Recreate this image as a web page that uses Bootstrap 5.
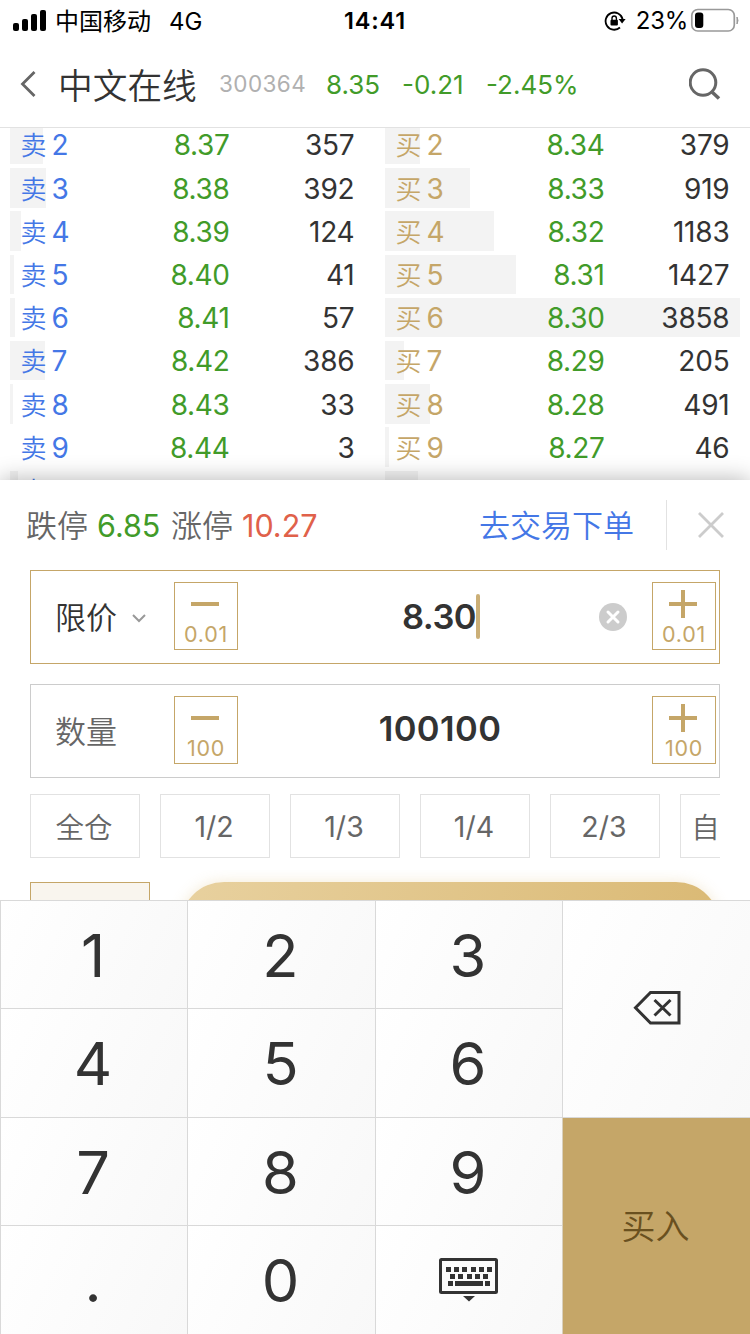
<!DOCTYPE html>
<html lang="zh-CN">
<head>
<meta charset="utf-8">
<meta name="viewport" content="width=device-width, initial-scale=1">
<title>中文在线 300364</title>
<link href="https://cdn.jsdelivr.net/npm/bootstrap@5.3.0/dist/css/bootstrap.min.css" rel="stylesheet">
<style>
:root{--gold:#c5a668;--up:#e0614a;--down:#419b29;--ink:#333;--blue:#4477e6;--mute:#666}
body{font-family:Inter,"Noto Sans CJK SC",sans-serif;color:var(--ink);width:750px;height:1334px;overflow:hidden;background:#fff;line-height:1}
svg{display:block;flex:none}
.t-gold{color:var(--gold)}.t-up{color:var(--up)}.t-down{color:var(--down)}.t-blue{color:var(--blue)}.t-mute{color:var(--mute)}
.statusbar{height:40px;color:#000;font-size:24px;padding-top:1px}
.carrier{padding-top:2px}.net{padding-top:2px}
.third{flex:1 1 0}
.clock{font-weight:600;font-size:23.5px;letter-spacing:.8px}
.net{margin-left:18px}
.pct{margin:0 2px 0 10px;letter-spacing:-.3px;padding-top:1px}
.titlebar{height:88px;border-bottom:1px solid #e2e2e2;padding:1px 29px 0 20px}
.stock{font-size:34.7px;width:161px;margin-left:21px;font-weight:350;padding-top:4px}
.code{font-size:22.5px;color:#b0b0b0;letter-spacing:.4px;width:107px;padding-top:1px}
.quote{font-size:26px;padding-top:1px}
.book{height:352px;overflow:hidden}
.side{margin-top:-2.9px;padding:0 10px}
.level{height:43.2px;position:relative;font-size:28px}
.depth{position:absolute;left:0;top:0;height:39.3px;background:#f3f3f3}
.level .in{position:relative;height:40.7px;padding:0 10.5px}
.lab{width:60px}.lab span{font-size:26px;font-weight:350}.lab b{font-weight:400;margin-left:5px}
.price{width:149px;letter-spacing:-.35px}.vol{letter-spacing:-.2px}
.sheet{height:420px;box-shadow:0 0 22px rgba(0,0,0,.3);position:relative;background:#fff}
.sheethead{height:90px;padding:0 26px;font-size:31px}
.sheethead .cj{padding-top:1px}.sheethead .lim{padding-top:2px}
.lim{font-size:30.5px}
.sheethead .cj,.field .cj,.chip .cj{font-weight:350}
.vline{width:1px;height:50px;background:#e2e2e2}
.field{height:94px;border:1px solid #ccc;margin:0 30px 20px;padding:11px 3px 0 24px}
.field.on{border-color:var(--gold)}
.fname{width:119px;height:68px;font-size:31px;padding-top:2px}
.step{width:64px;height:68px;border:1px solid var(--gold);color:var(--gold);font-size:21.5px;letter-spacing:.7px;padding:7px 2px 4px 0}
.stepv{position:relative;left:1px}
.amount{height:68px;font-weight:600;font-size:34.5px;position:relative;padding:1px 8px 0 0}
.amount .val{letter-spacing:-.5px;padding-top:1px}
.caret{width:4px;height:45px;border-radius:2px;background:var(--gold);opacity:.9}
.amount .qty{letter-spacing:.4px;margin:0 2px 3px 0}
.clear{position:absolute;right:25px;top:21px}
.chips{margin:-4px 30px 24px;gap:20px;overflow:hidden}
.chip{flex:0 0 110px;height:64px;border:1px solid #e2e2e2;font-size:28.5px;color:var(--mute);padding:3px 2px 0 0}
.chip .cj{padding-top:1px}
.actions{height:18px;padding:0 30px;gap:30px;clip-path:inset(-12px 0 0 0)}
.mode{width:120px;height:88px;border:1px solid var(--gold);background:#f9f5ee;color:var(--gold);font-size:26px;line-height:26px;padding-top:17.5px}
.buy{width:540px;height:88px;border-radius:44px;background:linear-gradient(100deg,#e8d19f,#dab974);box-shadow:0 0 14px rgba(218,185,116,.3)}
.keypad{display:grid;height:434px;grid-template-columns:187px 188px 187px 188px;grid-template-rows:108px 109px 108px 109px;position:relative}
.pkey{border:0 solid #d9d9d9;border-width:1px 0 0 1px;background:linear-gradient(115deg,#fff,#f8f8f8);font-size:59.5px;padding:2px 2px 0 0}
.tall{grid-column:4;grid-row:1/3;padding:0}
.go{grid-column:4;grid-row:3/5;background:var(--gold);border-left:1px solid #d9d0bd;border-top:1px solid #d9d9d9;color:#69501f;font-size:34px;font-weight:350;padding:1px 2px 0 0}
</style>
</head>
<body class="d-flex flex-column">

<div class="statusbar d-flex align-items-center">
  <div class="third d-flex align-items-center">
    <svg width="35" height="22" viewBox="0 0 35 22" style="margin-left:12px"><rect x="1" y="13" width="6" height="8" rx="2"/><rect x="10" y="9" width="6" height="12" rx="2"/><rect x="19" y="4" width="6" height="17" rx="2"/><rect x="28" y="0" width="6" height="21" rx="2"/></svg>
    <span class="carrier ms-2">中国移动</span><span class="net">4G</span>
  </div>
  <div class="clock">14:41</div>
  <div class="third d-flex align-items-center justify-content-end">
    <svg width="22" height="20" viewBox="0 0 22 20"><path d="M18.600 8.300A8.600 8.600 0 1 0 16 16.500" fill="none" stroke="#000" stroke-width="1.800"/><path d="M14.600 8h7l-3.500 4.600z"/><rect x="6.500" y="8.700" width="7.400" height="5.800" rx="1"/><path d="M8 9V7.200a2.200 2.200 0 0 1 4.400 0V9" fill="none" stroke="#000" stroke-width="1.400"/></svg>
    <span class="pct">23%</span>
    <svg width="50" height="24" viewBox="0 0 50 24" style="margin-right:10px;margin-top:-2px"><rect x="1.800" y="1.500" width="42.500" height="21.500" rx="6" fill="none" stroke="#999" stroke-width="1.700"/><rect x="5" y="4.500" width="8.300" height="15.500" rx="3"/><path d="M47 9q2 3.500 0 7z" fill="#999" stroke="#999"/></svg>
  </div>
</div>

<header class="titlebar d-flex align-items-center">
  <svg width="17" height="28" viewBox="0 0 17 28"><path d="M14.500 2 2.500 14l12 12" fill="none" stroke="#666" stroke-width="2.800"/></svg>
  <span class="stock text-nowrap">中文在线</span>
  <span class="code">300364</span>
  <span class="quote t-down" style="width:76px">8.35</span>
  <span class="quote t-down" style="width:84px">-0.21</span>
  <span class="quote t-down">-2.45%</span>
  <svg class="ms-auto" width="32" height="32" viewBox="0 0 32 32"><circle cx="14" cy="14.500" r="12.800" fill="none" stroke="#666" stroke-width="3"/><path d="m22.500 23.500 7.500 7" stroke="#666" stroke-width="3.500"/></svg>
</header>

<main class="book d-flex">
  <section class="side w-50" id="asks"></section>
  <section class="side w-50" id="bids"></section>
</main>

<section class="sheet">
  <div class="sheethead d-flex align-items-center">
    <span class="cj t-mute">跌停</span><span class="lim t-down" style="margin-left:9px;width:74px">6.85</span>
    <span class="cj t-mute">涨停</span><span class="lim t-up" style="margin-left:9px">10.27</span>
    <span class="cj t-blue ms-auto">去交易下单</span>
    <span class="vline" style="margin-left:32px"></span>
    <svg width="28" height="28" viewBox="0 0 28 28" style="margin-left:30px;margin-right:-1px"><path d="m2 2 24 24M26 2 2 26" stroke="#ccc" stroke-width="2.800"/></svg>
  </div>

  <div class="field on d-flex align-items-start">
    <div class="fname d-flex align-items-center"><span class="cj">限价</span><svg width="16" height="10" viewBox="0 0 16 10" style="margin-left:14px;margin-top:1px"><path d="m2 2 6 6 6-6" fill="none" stroke="#999" stroke-width="2"/></svg></div>
    <div class="step d-flex flex-column align-items-center"><svg width="28" height="28"><path d="M0 14h28" stroke="#c5a668" stroke-width="4"/></svg><span class="mt-auto stepv">0.01</span></div>
    <div class="amount live flex-fill d-flex align-items-center justify-content-center"><span class="val">8.30</span><span class="caret"></span>
      <svg class="clear" width="28" height="28"><circle cx="14" cy="14" r="14" fill="#ccc"/><path d="m9 9 10 10M19 9 9 19" stroke="#fff" stroke-width="3" stroke-linecap="round"/></svg></div>
    <div class="step d-flex flex-column align-items-center"><svg width="28" height="28"><path d="M0 14h28M14 0v28" stroke="#c5a668" stroke-width="4"/></svg><span class="mt-auto stepv">0.01</span></div>
  </div>

  <div class="field d-flex align-items-start">
    <div class="fname d-flex align-items-center t-mute"><span class="cj">数量</span></div>
    <div class="step d-flex flex-column align-items-center"><svg width="28" height="28"><path d="M0 14h28" stroke="#c5a668" stroke-width="4"/></svg><span class="mt-auto stepv">100</span></div>
    <div class="amount flex-fill d-flex align-items-center justify-content-center"><span class="val qty">100100</span></div>
    <div class="step d-flex flex-column align-items-center"><svg width="28" height="28"><path d="M0 14h28M14 0v28" stroke="#c5a668" stroke-width="4"/></svg><span class="mt-auto stepv">100</span></div>
  </div>

  <div class="chips d-flex">
    <div class="chip d-flex align-items-center justify-content-center"><span class="cj">全仓</span></div>
    <div class="chip d-flex align-items-center justify-content-center">1/2</div>
    <div class="chip d-flex align-items-center justify-content-center">1/3</div>
    <div class="chip d-flex align-items-center justify-content-center">1/4</div>
    <div class="chip d-flex align-items-center justify-content-center">2/3</div>
    <div class="chip d-flex align-items-center justify-content-center"><span class="cj text-nowrap">自定义</span></div>
  </div>

  <div class="actions d-flex">
    <div class="mode text-center">标准版</div>
    <div class="buy"></div>
  </div>
</section>

<section class="keypad">
  <div class="pkey d-flex align-items-center justify-content-center">1</div>
  <div class="pkey d-flex align-items-center justify-content-center">2</div>
  <div class="pkey d-flex align-items-center justify-content-center">3</div>
  <div class="pkey tall d-flex align-items-center justify-content-center"><svg width="48" height="36" viewBox="0 0 48 36" style="margin-bottom:2px"><path d="M17.500 2.500H46v30.500H17.500L2.500 17.800z" fill="none" stroke="#333" stroke-width="3"/><path d="m21.500 10 16 15.500M37.500 10l-16 15.500" stroke="#333" stroke-width="3"/></svg></div>
  <div class="pkey d-flex align-items-center justify-content-center">4</div>
  <div class="pkey d-flex align-items-center justify-content-center">5</div>
  <div class="pkey d-flex align-items-center justify-content-center">6</div>
  <div class="pkey d-flex align-items-center justify-content-center">7</div>
  <div class="pkey d-flex align-items-center justify-content-center">8</div>
  <div class="pkey d-flex align-items-center justify-content-center">9</div>
  <div class="go d-flex align-items-center justify-content-center">买入</div>
  <div class="pkey d-flex align-items-center justify-content-center">.</div>
  <div class="pkey d-flex align-items-center justify-content-center">0</div>
  <div class="pkey d-flex align-items-center justify-content-center"><svg width="59" height="44" viewBox="0 0 59 44" style="margin-bottom:3px;margin-left:1px"><rect x="1.500" y="1.500" width="56" height="33" rx="1" fill="none" stroke="#333" stroke-width="3"/><g fill="#333"><path d="M7 9h5v5H7zM15 9h5v5h-5zM23 9h5v5h-5zM32 9h5v5h-5zM40 9h5v5h-5zM48 9h5v5h-5zM11 16h5v5h-5zM19 16h5v5h-5zM28 16h5v5h-5zM36 16h5v5h-5zM44 16h5v5h-5zM9 23h5v5H9zM16 23h28v5H16zM46 23h5v5h-5zM24 38h12l-6 5.500z"/></g></svg></div>
</section>

<script>
const asks=[[2,'8.37',357],[3,'8.38',392],[4,'8.39',124],[5,'8.40',41],[6,'8.41',57],[7,'8.42',386],[8,'8.43',33],[9,'8.44',3],[10,'8.45',87]];
const bids=[[2,'8.34',379],[3,'8.33',919],[4,'8.32',1183],[5,'8.31',1427],[6,'8.30',3858],[7,'8.29',205],[8,'8.28',491],[9,'8.27',46],[10,'8.26',359]];
const max=3858;
function fill(id,name,tone,rows){
  document.getElementById(id).innerHTML=rows.map(([n,p,v])=>`<div class="level"><div class="depth" style="width:${Math.floor(v/max*355+.45)}px"></div><div class="in d-flex align-items-center"><div class="lab text-nowrap ${tone}"><span>${name}</span><b>${n}</b></div><div class="price text-end t-down">${p}</div><div class="vol ms-auto">${v}</div></div></div>`).join('');
}
fill('asks','卖','t-blue',asks);
fill('bids','买','t-gold',bids);
</script>
<script src="https://cdn.jsdelivr.net/npm/bootstrap@5.3.0/dist/js/bootstrap.bundle.min.js"></script>
</body>
</html>
